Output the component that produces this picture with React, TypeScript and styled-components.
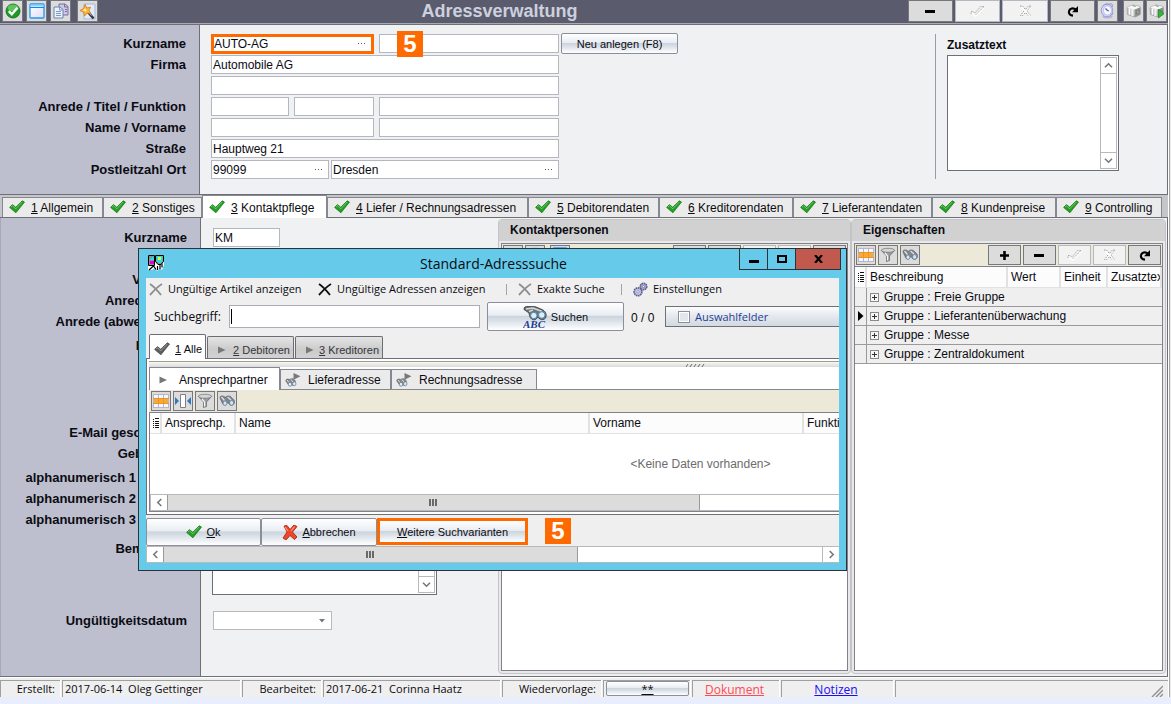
import React from "react";
import styled, { createGlobalStyle, css } from "styled-components";

const sans = `"Liberation Sans", Arial, sans-serif`;
const ui = `"Open Sans", "Segoe UI", sans-serif`;
const c = {
  bar: "#5a5c6d",
  side: "#bdbfcf",
  paper: "#f0f1f3",
  face: "#efefef",
  line: "#6f6f77",
  field: "#b4b7bf",
  orange: "#ff6a00",
  sky: "#66caea",
  beige: "#ece9d8",
  gray: "#dcdcdc",
};

const GlobalStyle = createGlobalStyle`
  *, *::before, *::after { box-sizing: border-box; }
  body { margin: 0; background: #e8eefe; font: 12px/16px ${sans}; color: #0b0b12; }
  button, input, textarea, select { font: inherit; color: inherit; margin: 0; padding: 0; border-radius: 0; }
  svg { display: block; flex: none; }
`;

/* ---------- page frame ---------- */
const Page = styled.div`
  position: relative;
  min-height: 100vh;
  display: flex;
  flex-direction: column;
  padding-bottom: 7px;
`;
const Frame = styled.main`
  flex: 1;
  display: flex;
  flex-direction: column;
  margin-right: 3px;
  background: #c5c6ca;
  box-shadow: 1px 0 #fff, 2px 0 #a9a9ac, 3px 0 #e9e9e9;
`;
const TitleBar = styled.header`
  display: flex;
  height: 23px;
  padding: 0 1px 0 2px;
  background: ${c.bar};
`;
const ToolGroup = styled.div<{ $end?: boolean }>`
  flex: ${(p) => (p.$end ? "1" : "0 0 36%")};
  display: flex;
  gap: ${(p) => (p.$end ? 2 : 3)}px;
  justify-content: ${(p) => (p.$end ? "flex-end" : "flex-start")};
`;
const Title = styled.h1`
  margin: 0;
  font: bold 18px/23px ${sans};
  color: #cdd0de;
`;
const ToolButton = styled.button<{ $w?: number; $dim?: boolean; $gap?: number }>`
  width: ${(p) => p.$w ?? 21}px;
  height: 22px;
  margin-left: ${(p) => p.$gap ?? 0}px;
  display: flex;
  align-items: center;
  justify-content: center;
  border: 1px solid ${(p) => (p.$dim ? "#b5b8c0" : "#77787e")};
  background: ${(p) => (p.$dim ? "#f2f2f2" : c.gray)};
`;
const SmallTool = styled(ToolButton)`
  height: 20px;
`;

/* ---------- forms ---------- */
const FormBand = styled.section<{ $side: number }>`
  background: linear-gradient(
    to right,
    ${c.side} ${(p) => p.$side}px,
    ${c.line} ${(p) => p.$side}px ${(p) => p.$side + 1}px,
    ${c.paper} ${(p) => p.$side + 1}px
  );
`;
const HeaderBand = styled(FormBand)`
  display: flex;
  justify-content: space-between;
  padding: 9px 0 15px;
  margin-top: 2px;
  border-right: 1px solid ${c.line};
  border-bottom: 1px solid ${c.line};
  box-shadow: 0 -1px ${c.line}, 0 -2px #a9aab2, 0 1px #9a9ba3;
`;
const HeaderAction = styled.div`
  flex: 1;
  margin-top: -1px;
  padding-left: 2px;
`;
const FormRow = styled.div<{ $gap?: number; $col?: number }>`
  display: grid;
  grid-template-columns: 186px 1fr;
  column-gap: ${(p) => p.$col ?? 25}px;
  margin-top: ${(p) => p.$gap ?? 2}px;
`;
const Label = styled.label<{ $inset?: number }>`
  padding-right: ${(p) => p.$inset ?? 0}px;
  font: bold 13px/19px ${sans};
  text-align: right;
  white-space: nowrap;
`;
const Fields = styled.div<{ $gap?: number }>`
  display: flex;
  gap: ${(p) => p.$gap ?? 5}px;
`;
const FieldBox = styled.span<{ $w: number; $hot?: boolean }>`
  width: ${(p) => p.$w}px;
  height: 19px;
  display: flex;
  align-items: center;
  border: 1px solid ${c.field};
  background: #fff;
  ${(p) =>
    p.$hot &&
    css`
      height: 20px;
      margin-bottom: -1px;
      border: 3px solid ${c.orange};
    `}
`;
const TextInput = styled.input<{ $hot?: boolean }>`
  flex: 1;
  min-width: 0;
  height: 14px;
  border: 0;
  outline: 0;
  background: none;
  padding-left: ${(p) => (p.$hot ? 0 : 1)}px;
  line-height: 14px;
`;
const More = styled.button`
  border: 0;
  background: none;
  padding-right: 5px;
`;
const PushButton = styled.button<{ $w: number; $h: number; $hot?: boolean; $space?: number }>`
  flex: none;
  width: ${(p) => p.$w}px;
  height: ${(p) => p.$h}px;
  display: flex;
  align-items: center;
  justify-content: center;
  gap: ${(p) => p.$space ?? 4}px;
  border: ${(p) => (p.$hot ? `3px solid ${c.orange}` : "1px solid #8b8f9b")};
  border-radius: ${(p) => (p.$hot ? 0 : 2)}px;
  background: linear-gradient(#fff, #e9edf2 45%, #ccd5de 50%, #d9e0e7 65%, #fff);
  font-size: 11px;
  white-space: nowrap;
`;
const Badge = styled.span`
  position: absolute;
  width: 26px;
  height: 26px;
  background: ${c.orange};
  color: #fff;
  font: bold 24px/26px ${sans};
  text-align: center;
`;
const HeaderBadge = styled(Badge)`
  left: 397px;
  top: 31px;
`;
const ExtraText = styled.div`
  width: 232px;
  padding: 0 0 8px 11px;
  border-left: 1px solid #9a9ba3;
`;
const ExtraLabel = styled.label`
  display: block;
  padding: 3px 0 2px;
  font: bold 12px/16px ${sans};
`;
const MemoBox = styled.div<{ $w: number; $h: number }>`
  width: ${(p) => p.$w}px;
  height: ${(p) => p.$h}px;
  display: flex;
  padding: 1px;
  border: 1px solid ${c.line};
  background: #fff;
`;
const Memo = styled.textarea`
  flex: 1;
  min-width: 0;
  border: 0;
  resize: none;
  outline: 0;
`;
const VScroll = styled.div`
  width: 17px;
  display: flex;
  flex-direction: column;
  justify-content: space-between;
  border: 1px solid #b9b9b9;
`;
const ArrowButton = styled.button<{ $side: "top" | "bottom" | "left" | "right" }>`
  flex: none;
  width: 17px;
  height: 16px;
  display: grid;
  place-items: center;
  border: 0 solid #b9b9b9;
  background: #fff;
  ${(p) => p.$side === "top" && "border-bottom-width: 1px; width: 100%;"}
  ${(p) => p.$side === "bottom" && "border-top-width: 1px; width: 100%;"}
  ${(p) => p.$side === "left" && "border-left-width: 1px; height: 100%;"}
  ${(p) => p.$side === "right" && "border-left-width: 1px; height: 100%;"}
`;
const SelectBox = styled.span`
  width: 119px;
  height: 19px;
  display: grid;
  align-items: center;
  border: 1px solid #b9b9b9;
  background: #fff;
  select, svg { grid-area: 1 / 1; }
  svg { justify-self: end; margin-right: 6px; }
`;
const Select = styled.select`
  width: 100%;
  height: 100%;
  border: 0;
  appearance: none;
  background: none;
`;

/* ---------- main tabs ---------- */
const TabStrip = styled.nav`
  display: flex;
  align-items: flex-end;
  height: 23px;
  padding-left: 2px;
  border-bottom: 1px solid ${c.line};
  background: #c5c6ca;
`;
const Tab = styled.button<{ $w: number; $on?: boolean }>`
  flex: none;
  width: ${(p) => p.$w}px;
  height: ${(p) => (p.$on ? 23 : 20)}px;
  margin-bottom: ${(p) => (p.$on ? -1 : 0)}px;
  display: flex;
  align-items: center;
  gap: 6px;
  padding: ${(p) => (p.$on ? 2 : 1)}px 0 0 6px;
  border: 1px solid #858792;
  border-bottom: 0;
  background: ${(p) => (p.$on ? "#fff" : "#ebebeb")};
  white-space: nowrap;
`;
const TabTick = styled.span`
  margin-bottom: 2px;
`;

/* ---------- workspace ---------- */
const Workspace = styled.div`
  flex: 1;
  display: flex;
  padding-right: 1px;
  background: ${c.paper};
  border-right: 1px solid ${c.line};
  border-bottom: 1px solid ${c.line};
`;
const ContactForm = styled(FormBand)`
  width: 498px;
  padding-top: 10px;
  border-left: 1px solid #a6a8ba;
`;
const Panel = styled.section<{ $w?: number }>`
  flex: ${(p) => (p.$w ? `0 0 ${p.$w}px` : "1")};
  min-width: 0;
  display: flex;
  flex-direction: column;
  margin: 1px 0 2px;
  padding: 0 2px 2px;
  border: 1px solid #c4c4c6;
  border-radius: 4px;
  background: #e9e9eb;
`;
const PanelTitle = styled.h2`
  margin: 0 -2px 2px;
  padding: 2px 11px 3px;
  background: #d1d1d1;
  font: bold 12px/16px ${sans};
`;
const PanelBody = styled.div`
  flex: 1;
  border: 1px solid #80818b;
  background: #fff;
`;
const Toolbar = styled.div`
  display: flex;
  gap: 2px;
  padding: 1px 1px 0;
  height: 22px;
  background: ${c.beige};
`;
const Spacer = styled.span`
  flex: 1;
`;
const DataTable = styled.table<{ $w?: number }>`
  width: ${(p) => (p.$w ? `${p.$w}px` : "100%")};
  table-layout: fixed;
  border-collapse: separate;
  border-spacing: 0;
  border-top: 1px solid #80818b;
`;
const Th = styled.th<{ $w?: number }>`
  width: ${(p) => (p.$w ? `${p.$w}px` : "auto")};
  height: 21px;
  padding: 0 0 0 3px;
  border-right: 2px solid #e2e2e2;
  border-bottom: 1px solid #e2e2e2;
  background: #fcfcfc;
  font-weight: normal;
  text-align: left;
  white-space: nowrap;
  overflow: hidden;
`;
const GutterCell = styled.td`
  height: 19px;
  padding: 0 0 0 3px;
  border-right: 1px solid #9a9a9a;
  border-bottom: 1px solid #9a9a9a;
  background: ${c.face};
`;
const GroupCell = styled.td`
  height: 19px;
  padding: 0;
  border-bottom: 1px solid #9a9a9a;
  background: ${c.face};
`;
const GroupLine = styled.div`
  display: flex;
  align-items: center;
  gap: 5px;
  padding-left: 3px;
`;
const Expander = styled.button`
  width: 9px;
  height: 9px;
  border: 1px solid #8a8a8a;
  background: #f6f6f6;
  display: grid;
  place-items: center;
`;

/* ---------- status bar ---------- */
const StatusBar = styled.footer`
  display: flex;
  gap: 2px;
  height: 20px;
  margin-right: 3px;
  padding-top: 2px;
  border-top: 1px solid #fff;
  background: ${c.face};
  box-shadow: 1px 0 #fff, 2px 0 #a9a9ac, 3px 0 #e9e9e9;
  font: 11px/15px ${ui};
`;
const StatusCell = styled.div<{ $w?: number; $align?: string }>`
  flex: ${(p) => (p.$w ? `0 0 ${p.$w}px` : "1")};
  min-width: 0;
  display: flex;
  justify-content: ${(p) => p.$align ?? "flex-start"};
  padding: 0 5px 0 2px;
  border: solid #a0a0a0;
  border-width: 1px 0 0 1px;
  box-shadow: 1px 0 #fff;
  white-space: pre;
`;
const StatusLink = styled.a<{ $red?: boolean }>`
  color: ${(p) => (p.$red ? "#ff4a52" : "#1a0cf5")};
  font-size: 12px;
  line-height: 17px;
`;

/* ---------- dialog ---------- */
const Dialog = styled.section`
  position: absolute;
  left: 138px;
  top: 248px;
  width: 709px;
  padding: 0 7px 7px;
  border: 1px solid #2e3136;
  background: ${c.sky};
`;
const DialogBar = styled.header`
  display: grid;
  grid-template-columns: 102px 1fr 102px;
  height: 29px;
  margin-right: -2px;
`;
const DialogTitle = styled.h2`
  margin: 0;
  font: 14px/30px ${ui};
  text-align: center;
`;
const AppIcon = styled.div`
  padding: 6px 0 0 2px;
`;
const WindowButtons = styled.div`
  display: flex;
  justify-content: flex-end;
`;
const WindowButton = styled.button<{ $close?: boolean }>`
  width: ${(p) => (p.$close ? 46 : 28)}px;
  height: 21px;
  display: grid;
  place-items: center;
  border: solid #2e3136;
  border-width: 0 ${(p) => (p.$close ? 1 : 0)}px 1px 1px;
  background: ${(p) => (p.$close ? "#c2594f" : c.sky)};
`;
const DialogBody = styled.div`
  background: ${c.face};
  overflow: hidden;
`;
const OptionRow = styled.div`
  display: flex;
  align-items: center;
  height: 24px;
  padding: 0 0 2px 3px;
  font: 11px/22px ${ui};
`;
const Option = styled.button<{ $w: number }>`
  width: ${(p) => p.$w}px;
  display: flex;
  align-items: center;
  gap: 5px;
  border: 0;
  background: none;
  white-space: nowrap;
`;
const OptionRule = styled.span`
  width: 12px;
  height: 11px;
  border-left: 1px solid #a4a4a4;
`;
const SearchRow = styled.div`
  display: flex;
  align-items: center;
  height: 29px;
  padding-left: 8px;
`;
const SearchLabel = styled.label`
  width: 75px;
  font: 12px/16px ${ui};
`;
const SearchInput = styled.input`
  width: 251px;
  height: 23px;
  margin-right: 7px;
  border: 1px solid #a9adb8;
  background: linear-gradient(#000, #000) 1px 3px / 1px 15px no-repeat #fff;
`;
const HitCount = styled.output`
  width: 41px;
  padding: 3px 0 0 7px;
`;
const Selection = styled.label`
  flex: 1;
  height: 21px;
  display: flex;
  align-items: center;
  gap: 5px;
  padding-left: 12px;
  border: solid ${c.line};
  border-width: 1px 0 1px 1px;
  background: linear-gradient(#fdfdfe, #e8ebf0 40%, #d3d9e1);
  color: #1c3f94;
  font: 11px/16px ${ui};
`;
const Check = styled.input`
  appearance: none;
  width: 12px;
  height: 12px;
  border: 1px solid #8b8f9b;
  background: #e3e6ea;
  box-shadow: inset 0 0 0 1px #fff;
`;
const FilterTabs = styled.div`
  display: flex;
  align-items: flex-end;
  gap: 1px;
  height: 28px;
  padding: 2px 3px 0;
  border-bottom: 1px solid ${c.line};
`;
const FilterTab = styled.button<{ $w: number; $on?: boolean }>`
  width: ${(p) => p.$w}px;
  height: ${(p) => (p.$on ? 25 : 22)}px;
  margin-bottom: ${(p) => (p.$on ? -1 : 0)}px;
  display: flex;
  align-items: center;
  justify-content: space-between;
  padding: ${(p) => (p.$on ? "3px 3px 0 4px" : "4px 3px 0 9px")};
  border: 1px solid #6c6d74;
  border-bottom: 0;
  border-radius: 2px 2px 0 0;
  background: ${(p) => (p.$on ? "#fff" : "linear-gradient(#e4e4e4, #cbcbcb 60%, #d2d2d2)")};
  color: ${(p) => (p.$on ? "#0b0b12" : "#36363c")};
  white-space: nowrap;
  font-size: 11px;
`;
const ResultArea = styled.div`
  padding-left: 2px;
  border-left: 1px solid ${c.line};
  border-bottom: 1px solid ${c.line};
  background: #fff;
`;
const Splitter = styled.div`
  height: 8px;
  padding: 3px 0 0 536px;
  border-top: 2px solid #fff;
  box-shadow: inset 0 1px #9c9c9c;
  background: linear-gradient(#fff, #f3efe4 40%, #d6dae0);
`;
const SubTabs = styled.div`
  display: flex;
  align-items: flex-end;
  height: 23px;
  border-bottom: 1px solid #858792;
`;
const SubTab = styled.button<{ $w: number; $on?: boolean }>`
  width: ${(p) => p.$w}px;
  height: ${(p) => (p.$on ? 23 : 20)}px;
  margin-bottom: ${(p) => (p.$on ? -1 : 0)}px;
  display: flex;
  align-items: center;
  gap: 7px;
  padding: 1px 0 0 4px;
  border: 1px solid #858792;
  border-bottom: 0;
  background: ${(p) => (p.$on ? "#fff" : "#ebebeb")};
  white-space: nowrap;
`;
const ResultGrid = styled.div`
  border-left: 1px solid #80818b;
  border-bottom: 1px solid #80818b;
  margin-bottom: 2px;
  overflow: hidden;
`;
const EmptyCell = styled.td`
  height: 60px;
  padding: 0;
  color: #6c6c6c;
  text-align: center;
`;
const HScroll = styled.div`
  display: flex;
  height: 17px;
  border-top: 1px solid #b9b9b9;
  border-bottom: 1px solid #b9b9b9;
  background: #fff;
`;
const Thumb = styled.span<{ $w: number }>`
  width: ${(p) => p.$w}px;
  display: grid;
  place-items: center;
  border-right: 1px solid #9a9a9a;
  border-left: 1px solid #9a9a9a;
  background: ${c.gray};
`;
const Actions = styled.div`
  display: flex;
  padding-top: 3px;
  height: 31px;
  position: relative;
`;
const ActionBadge = styled(Badge)`
  left: 399px;
  top: 3px;
`;

/* ---------- icons ---------- */
const Tick = ({ color = "#22a022", dark = "#12700f" }) => (
  <svg width="16" height="14" viewBox="0 0 16 14">
    <path d="M.6 7.400 3.400 4.600l3.300 2.600L13.300.8l2.200 1.300L6.900 12.800Z" fill={color} stroke={dark} strokeWidth=".7" strokeLinejoin="round" />
    <path d="m2 7 1.500-1.200 3.300 3L13.200 2" fill="none" stroke="#fff" strokeOpacity=".35" />
  </svg>
);
const Dots = () => (
  <svg width="8" height="2" viewBox="0 0 8 2"><path d="M0 .5h1M3 .5h1M6 .5h1" stroke="#555" /></svg>
);
const Chevron = ({ d }: { d: string }) => (
  <svg width="9" height="9" viewBox="0 0 9 9"><path d={d} fill="none" stroke="#77787c" strokeWidth="1.6" /></svg>
);
const up = "M1 6.3 4.5 2.8 8 6.3";
const down = "M1 2.7 4.5 6.2 8 2.7";
const left = "M6.3 1 2.8 4.5 6.3 8";
const right = "M2.7 1 6.2 4.5 2.7 8";
const Minus = () => (
  <svg width="11" height="11" viewBox="0 0 11 11"><path d="M0 5.500h10" stroke="#000" strokeWidth="3" /></svg>
);
const Plus = () => (
  <svg width="11" height="11" viewBox="0 0 11 11"><path d="M1 5.500h9M5.500 1v9" stroke="#000" strokeWidth="2.600" /></svg>
);
const DimTick = () => (
  <svg width="15" height="12" viewBox="0 0 15 12">
    <path d="M2 8.500 5.500 11l9-8.500" fill="none" stroke="#fff" strokeWidth="1.500" />
    <path d="M1 9V6.500h2l2 1.500L10.500 1.500H14L5.500 10" fill="none" stroke="#a8a8a8" strokeDasharray="1.500 1" />
  </svg>
);
const DimCross = () => (
  <svg width="13" height="12" viewBox="0 0 13 12">
    <path d="m2.500 2 9 9m0-9-9 9" stroke="#fff" strokeWidth="2" />
    <path d="M1 1h2.500l3 3.500L9.500 1H12L8 6l3.500 4.500M5 6 1.500 10.500H4l2.500-3 2.500 3" fill="none" stroke="#9c9c9c" strokeDasharray="1.500 1" />
  </svg>
);
const Redo = () => (
  <svg width="12" height="12" viewBox="0 0 12 12">
    <path d="M6 10.700C3 10.500 1.500 8.500 2 6.200 2.500 3.300 6.200 2.300 9 4.600" fill="none" stroke="#000" strokeWidth="2.200" />
    <path d="M11 1v6.200H5Z" fill="#000" />
  </svg>
);
const OkBall = () => (
  <svg width="16" height="16" viewBox="0 0 16 16">
    <circle cx="8" cy="8" r="7" fill="#1f9a24" stroke="#0f6a18" strokeWidth=".8" />
    <ellipse cx="8" cy="4.800" rx="5.500" ry="3.400" fill="#7bd676" opacity=".7" />
    <path d="m3.800 8.200 3 3 5.600-6.400" fill="none" stroke="#fff" strokeWidth="2.400" />
  </svg>
);
const WindowIcon = () => (
  <svg width="16" height="16" viewBox="0 0 16 16">
    <defs><linearGradient id="win" x2="1" y2="1"><stop stopColor="#fff" /><stop offset="1" stopColor="#dcdcf8" /></linearGradient></defs>
    <rect x="1" y="1" width="14" height="14" rx="1" fill="url(#win)" stroke="#2398f0" strokeWidth="1.300" />
    <path d="M1.500 2.500h13" stroke="#8fd4ff" strokeWidth="2" /><path d="M1 4.500h14" stroke="#1888e8" />
  </svg>
);
const CopyIcon = () => (
  <svg width="16" height="16" viewBox="0 0 16 16">
    <path d="M6 1h6l3 2.500V12H6Z" fill="#cfc8e2" stroke="#7b6ba6" /><path d="M11.500 1v3H15M12 6.500h2M12 8.500h2" fill="none" stroke="#7b6ba6" />
    <path d="M1 4h6l3 2.500V15H1Z" fill="#edf2fb" stroke="#6782b4" /><path d="M6.500 4v3H10M3 8.500h5M3 10.500h5M3 12.500h5" fill="none" stroke="#7f98c4" />
  </svg>
);
const WandIcon = () => (
  <svg width="17" height="17" viewBox="0 0 17 17">
    <path d="M5 1h11v15H5Z" fill="#e3eaf8" stroke="#a5b7da" />
    <path d="m9 9 5.500 6.500" stroke="#35363b" strokeWidth="2.600" /><path d="m9.500 9 3 3.500" stroke="#b8bac2" />
    <path d="m6.200 1.500 1.600 3.500 3.700-.8L10 7.500l2 3-3.800-.5L5.500 13l-.8-3.800L1 7.500l3.700-2Z" fill="#fcb73e" stroke="#cf7a15" strokeWidth=".8" />
    <path d="M6 5 7.500 8 4 8Z" fill="#fff1a8" />
  </svg>
);
const ClockIcon = () => (
  <svg width="15" height="16" viewBox="0 0 15 16">
    <ellipse cx="7.500" cy="13.500" rx="5" ry="2" fill="#b6b7dc" />
    <ellipse cx="7" cy="7.500" rx="5.700" ry="6.300" fill="#d7daf6" stroke="#9a9dd8" /><ellipse cx="7.500" cy="7.500" rx="4" ry="4.600" fill="#f6f7ff" stroke="#b2b6e4" strokeWidth=".8" />
    <path d="m7.500 7.500-2-2M7.500 7.500l1.500.5" stroke="#5058b8" strokeWidth="1.200" /><path d="M3 2.500 6 1h6l.5 3M12 12l1-2" fill="none" stroke="#9498d2" />
  </svg>
);
const BoxIcon = ({ play }: { play?: boolean }) => (
  <svg width="16" height="16" viewBox="0 0 16 16">
    <path d="m1 4.500 6-2.500 7 1.500v8L9.500 14 1.500 11.500Z" fill="#d9dad9" stroke="#8e908e" strokeWidth=".7" />
    <path d="M8.500 6.500 14.500 4v7.500l-6 2.500Z" fill="#8e918f" /><path d="M1 4.500 7 2l7.500 2-6 2.500Z" fill="#f6f7f6" />
    <path d="M3.500 5.500v6M6 6v7" stroke="#fff" strokeWidth="1.300" /><path d="M2 5v6.500M5 6v6.500" stroke="#b0b2b0" strokeWidth=".6" /><path d="m6.500 2.500 3 1" stroke="#5d9e5d" />
    <path d="M10.500 8 13 7v3l-2.500 1Z" fill="#a9aca9" stroke="#6a6d6b" strokeWidth=".6" />
    {play && <path d="m9.500 6.500 5.500 4-5.500 4.500Z" fill="#35b83a" stroke="#168a1e" strokeWidth=".7" />}
  </svg>
);
const GridIcon = () => (
  <svg width="16" height="16" viewBox="0 0 16 16">
    <path d="M0 1h16v14H0Z" fill="#f6f6fb" /><path d="M0 5h16v6H0Z" fill="#f9a935" />
    <path d="M0 1.500h16M0 14.500h16M.5 1v14M5.500 1v14M10.500 1v14M15.500 1v14" stroke="#b4b5cf" /><path d="M0 5.500h16M0 10.500h16M5.500 5v6M10.500 5v6" stroke="#e8962a" />
  </svg>
);
const FitIcon = () => (
  <svg width="18" height="16" viewBox="0 0 18 16">
    <path d="M6.500 1.500h5v13h-5Z" fill="#fff" stroke="#7e8086" /><path d="M1 4v8l4-4ZM17 4v8l-4-4Z" fill="#2f78bd" />
  </svg>
);
const FunnelIcon = () => (
  <svg width="16" height="16" viewBox="0 0 16 16">
    <path d="M1.500 3.500 6.500 9v5.500L9.500 13.500V9L14.500 3.500Z" fill="#9a9d9d" stroke="#5f6262" strokeWidth=".7" />
    <ellipse cx="8" cy="3.300" rx="6.700" ry="2" fill="#d4d6d6" stroke="#6e7070" strokeWidth=".7" /><path d="M5 6 7.600 9v4.500" stroke="#f4f4f4" fill="none" strokeWidth="1.300" />
  </svg>
);
const Binoculars = () => (
  <svg width="16" height="12" viewBox="0 0 16 12">
    <path d="M1 3C.5 1 3 .5 4.500 1.200L6.500 2.200C7.500.8 10 .6 11.500 1.500L15 5c1 2 .5 4-1 5-2 1-3.500.2-4-1.500L8 7.500 7.500 9.500C6 11 4 10 3.500 8.500Z" fill="#7f858a" stroke="#55595d" strokeWidth=".6" />
    <path d="m2.500 2 3 3.500M8.500 2l3.500 3" stroke="#dde1e5" strokeWidth="1.300" />
    <ellipse cx="6" cy="8.200" rx="1.900" ry="2.200" fill="#cfe6fb" stroke="#6a7f93" strokeWidth=".7" /><ellipse cx="12.600" cy="7.900" rx="2" ry="2.300" fill="#cfe6fb" stroke="#6a7f93" strokeWidth=".7" />
  </svg>
);
const SearchArrow = () => (
  <svg width="16" height="14" viewBox="0 0 16 14">
    <path d="m8.500 0 7 3.300-7 3.400Z" fill="#77797b" />
    <path d="M.8 8C.5 6 3 5.500 4.500 6.500 6 5 9 5.500 10 7.500c1 2.500.5 4-1 4.500l-5 .5Z" fill="#85888b" stroke="#5d6063" strokeWidth=".6" />
    <path d="m2 7 2 2.500M6 6.500l2 2.500" stroke="#dde1e5" />
    <ellipse cx="5" cy="11.300" rx="1.700" ry="2" fill="#dbecfb" stroke="#6a7680" strokeWidth=".7" /><ellipse cx="9.300" cy="10.800" rx="1.700" ry="2" fill="#dbecfb" stroke="#6a7680" strokeWidth=".7" />
  </svg>
);
const Play = ({ w = 9 }: { w?: number }) => (
  <svg width={w} height="8" viewBox="0 0 9 8"><path d="m1 .5 7.500 3.500L1 7.500Z" fill="#77787a" /></svg>
);
const BigSearch = () => (
  <svg width="24" height="22" viewBox="0 0 24 22">
    <path d="M1 3.500C.5 1 3 .3 5 .3h5c2 0 3.500.8 5 1.500L20 4c3 2 4 5 2.500 8-1.500 2-4 2-5.500 1L14.500 11c-1 3-4 3.500-6 2C6.500 11.500 6.500 9 6 7Z" fill="#6f7376" stroke="#35383b" strokeWidth=".8" />
    <path d="m3 3 7-1 5 2M6 5.500l4-1.500M14 3.500l5 2" fill="none" stroke="#d5d8da" strokeWidth="1.500" />
    <circle cx="10.800" cy="9.500" r="3.200" fill="#d6efff" stroke="#5384ac" /><circle cx="18.800" cy="9" r="3.300" fill="#d6efff" stroke="#5384ac" />
    <text x="0" y="21.500" fontFamily="Liberation Serif, serif" fontSize="11" fontWeight="bold" fontStyle="italic" fill="#1e3e94">ABC</text>
  </svg>
);
const Cross = ({ color }: { color: string }) => (
  <svg width="14" height="14" viewBox="0 0 14 14">
    <path d="M1 2c4 2.500 7 6 11 11M13 2C8.500 4.500 5 8.500 1 13" stroke={color} strokeWidth="1.900" fill="none" />
  </svg>
);
const Gears = () => (
  <svg width="15" height="15" viewBox="0 0 15 15">
    <circle cx="10.500" cy="4.500" r="3.300" fill="#a4a4ce" stroke="#5d5d88" strokeWidth="1.500" strokeDasharray="1.600 .6" />
    <circle cx="5" cy="9.800" r="3.900" fill="#b4b4dc" stroke="#5d5d88" strokeWidth="1.600" strokeDasharray="1.600 .6" />
    <circle cx="5" cy="9.800" r="2.600" fill="#c8c8ec" /><circle cx="5" cy="9.800" r="1.200" fill="#fff" stroke="#6c6c9c" strokeWidth=".6" />
    <circle cx="10.500" cy="4.500" r="1" fill="#fff" stroke="#6c6c9c" strokeWidth=".6" />
  </svg>
);
const RedCross = () => (
  <svg width="16" height="15" viewBox="0 0 16 15">
    <path d="m2 1 3-.5 3 4L12 0l3 1.500L10.500 7l4.500 5-2.500 2.500L8 10.500 4 15l-3-2 4-6Z" fill="#ef4528" stroke="#a51d0d" strokeWidth=".8" />
    <path d="m3 2 3 4M12.500 1.500 9 6" stroke="#ff9a80" strokeWidth="1.200" />
  </svg>
);
const RowMarks = () => (
  <svg width="7" height="10" viewBox="0 0 7 10">
    <path d="M0 1.500h1M2 .5h4M0 3.500h1M2 3.500h4M0 5.500h1M2 5.500h4M0 7.500h1M2 7.500h4M0 9.500h1M2 9.500h4" stroke="#111" />
  </svg>
);
const Grip = () => (
  <svg width="9" height="7" viewBox="0 0 9 7"><path d="M1 0v7M4 0v7M7 0v7" stroke="#6a6a6a" strokeWidth="2" /></svg>
);
const FinderIcon = () => (
  <svg width="16" height="16" viewBox="0 0 16 16">
    <path d="M0 0h16v10l-2 5-2-2-3 3-2-3-3 2-4 0Z" fill="#fff" />
    <path d="M.5.500h6v10h-6ZM7.500.500h8v6l-2.500 3h-3l-2.500-3Z" fill="#8f8f8f" stroke="#000" />
    <path d="m2 4 4-2.500V5H2Z" fill="#19e5ee" /><path d="M8.500 1h6v5L12 8.500 8.500 6Z" fill="#19e5ee" /><path d="M2 6h4v3H2Z" fill="#e400d8" /><path d="M10 2h3v3h-3Z" fill="#ffee20" />
    <path d="m1 15 4.500-4L8 14.500M9.500 15v-4M12 14v-4M14 12.500V8.500" stroke="#000" fill="none" strokeWidth="1.200" />
  </svg>
);

/* ---------- data ---------- */
const mainTabs = [
  { n: 1, t: "Allgemein", w: 101 }, { n: 2, t: "Sonstiges", w: 99 }, { n: 3, t: "Kontaktpflege", w: 125 },
  { n: 4, t: "Liefer / Rechnungsadressen", w: 201 }, { n: 5, t: "Debitorendaten", w: 131 },
  { n: 6, t: "Kreditorendaten", w: 134 }, { n: 7, t: "Lieferantendaten", w: 139 },
  { n: 8, t: "Kundenpreise", w: 124 }, { n: 9, t: "Controlling", w: 106 },
];
const contactRows = [
  { id: "vorname", t: "Vorname", gap: 23 }, { id: "anrede2", t: "Anrede / Titel" }, { id: "anrede3", t: "Anrede (abweichend)" },
  { id: "position", t: "Position", gap: 5 }, { id: "email", t: "E-Mail geschäftlich", gap: 68 }, { id: "geburt", t: "Geburtstag" },
  { id: "alpha1", t: "alphanumerisch 1", gap: 5, inset: 51 }, { id: "alpha2", t: "alphanumerisch 2", inset: 51 },
  { id: "alpha3", t: "alphanumerisch 3", inset: 51 },
];
const groups = ["Freie Gruppe", "Lieferantenüberwachung", "Messe", "Zentraldokument"];

type FieldProps = { id?: string; w: number; value?: string; more?: boolean; hot?: boolean; label?: string };
const Field = ({ id, w, value = "", more, hot, label }: FieldProps) => (
  <FieldBox $w={w} $hot={hot}>
    <TextInput id={id} defaultValue={value} $hot={hot} aria-label={label} />
    {more && <More aria-label="Auswählen"><Dots /></More>}
  </FieldBox>
);
const EditButtons = () => (
  <>
    <SmallTool $w={33} aria-label="Hinzufügen"><Plus /></SmallTool>
    <SmallTool $w={33} aria-label="Entfernen"><Minus /></SmallTool>
    <SmallTool $w={33} $dim aria-label="Übernehmen"><DimTick /></SmallTool>
    <SmallTool $w={33} $dim aria-label="Verwerfen"><DimCross /></SmallTool>
    <SmallTool $w={33} aria-label="Aktualisieren"><Redo /></SmallTool>
  </>
);
const MemoField = ({ id, w, h }: { id: string; w: number; h: number }) => (
  <MemoBox $w={w} $h={h}>
    <Memo id={id} />
    <VScroll>
      <ArrowButton $side="top" aria-label="Nach oben"><Chevron d={up} /></ArrowButton>
      <ArrowButton $side="bottom" aria-label="Nach unten"><Chevron d={down} /></ArrowButton>
    </VScroll>
  </MemoBox>
);

const AddressHeader = () => (
  <HeaderBand $side={199}>
    <div>
      <FormRow $gap={0}>
        <Label htmlFor="kurz">Kurzname</Label>
        <Fields>
          <Field id="kurz" w={163} value="AUTO-AG" more hot />
          <Field w={180} label="Kurzname Zusatz" />
        </Fields>
      </FormRow>
      <FormRow><Label htmlFor="firma">Firma</Label><Field id="firma" w={348} value="Automobile AG" /></FormRow>
      <FormRow><span /><Field w={348} label="Firma Zeile 2" /></FormRow>
      <FormRow>
        <Label htmlFor="anrede">Anrede / Titel / Funktion</Label>
        <Fields><Field id="anrede" w={78} /><Field w={80} label="Titel" /><Field w={180} label="Funktion" /></Fields>
      </FormRow>
      <FormRow>
        <Label htmlFor="name">Name / Vorname</Label>
        <Fields><Field id="name" w={163} /><Field w={180} label="Vorname" /></Fields>
      </FormRow>
      <FormRow><Label htmlFor="strasse">Straße</Label><Field id="strasse" w={348} value="Hauptweg 21" /></FormRow>
      <FormRow>
        <Label htmlFor="plz">Postleitzahl Ort</Label>
        <Fields $gap={2}><Field id="plz" w={118} value="99099" more /><Field w={228} value="Dresden" more label="Ort" /></Fields>
      </FormRow>
    </div>
    <HeaderAction><PushButton $w={117} $h={21}>Neu anlegen (F8)</PushButton></HeaderAction>
    <ExtraText>
      <ExtraLabel htmlFor="zusatz">Zusatztext</ExtraLabel>
      <MemoField id="zusatz" w={172} h={116} />
    </ExtraText>
  </HeaderBand>
);

const SearchDialog = () => (
  <Dialog role="dialog" aria-label="Standard-Adresssuche">
    <DialogBar>
      <AppIcon><FinderIcon /></AppIcon>
      <DialogTitle>Standard-Adresssuche</DialogTitle>
      <WindowButtons>
        <WindowButton aria-label="Minimieren"><svg width="10" height="10" viewBox="0 0 10 10"><path d="M0 7.500h10" stroke="#000" strokeWidth="3" /></svg></WindowButton>
        <WindowButton aria-label="Maximieren"><svg width="10" height="8" viewBox="0 0 10 8"><path d="M1 1h8v6H1Z" fill="none" stroke="#000" strokeWidth="2" /></svg></WindowButton>
        <WindowButton $close aria-label="Schließen"><svg width="9" height="8" viewBox="0 0 9 8"><path d="m1 0 7 8M8 0 1 8" stroke="#000" strokeWidth="2.200" /></svg></WindowButton>
      </WindowButtons>
    </DialogBar>
    <DialogBody>
      <OptionRow>
        <Option $w={169}><Cross color="#8e8e8e" />Ungültige Artikel anzeigen</Option>
        <Option $w={188}><Cross color="#111" />Ungültige Adressen anzeigen</Option>
        <OptionRule />
        <Option $w={103}><Cross color="#8e8e8e" />Exakte Suche</Option>
        <OptionRule />
        <Option $w={100}><Gears />Einstellungen</Option>
      </OptionRow>
      <SearchRow>
        <SearchLabel htmlFor="suche">Suchbegriff:</SearchLabel>
        <SearchInput id="suche" />
        <PushButton $w={137} $h={29}><BigSearch />Suchen</PushButton>
        <HitCount>0 / 0</HitCount>
        <Selection><Check type="checkbox" />Auswahlfelder</Selection>
      </SearchRow>
      <FilterTabs>
        <FilterTab $w={57} $on><Tick color="#5c5e60" dark="#3e4042" /><span><u>1</u> Alle</span></FilterTab>
        <FilterTab $w={87}><Play /><span><u>2</u> Debitoren</span></FilterTab>
        <FilterTab $w={88}><Play /><span><u>3</u> Kreditoren</span></FilterTab>
      </FilterTabs>
      <ResultArea>
        <Splitter>
          <svg width="20" height="3" viewBox="0 0 20 3"><path d="m1 3 2-3m2 3 2-3m2 3 2-3m2 3 2-3m2 3 2-3" stroke="#6e6e6e" /></svg>
        </Splitter>
        <SubTabs>
          <SubTab $w={131} $on><Play w={18} />Ansprechpartner</SubTab>
          <SubTab $w={111}><SearchArrow />Lieferadresse</SubTab>
          <SubTab $w={146}><SearchArrow />Rechnungsadresse</SubTab>
        </SubTabs>
        <Toolbar>
          <SmallTool $w={20} $gap={1} aria-label="Spalten"><GridIcon /></SmallTool>
          <SmallTool $w={20} aria-label="Breite anpassen"><FitIcon /></SmallTool>
          <SmallTool $w={20} aria-label="Filtern"><FunnelIcon /></SmallTool>
          <SmallTool $w={20} aria-label="Suchen"><Binoculars /></SmallTool>
        </Toolbar>
        <ResultGrid>
          <DataTable $w={1101}>
            <thead>
              <tr>
                <Th $w={12} aria-label="Zeile"><RowMarks /></Th>
                <Th $w={74}>Ansprechp.</Th><Th $w={354}>Name</Th><Th $w={214}>Vorname</Th><Th>Funktion</Th>
              </tr>
            </thead>
            <tbody><tr><EmptyCell colSpan={5}>&lt;Keine Daten vorhanden&gt;</EmptyCell></tr></tbody>
          </DataTable>
          <HScroll>
            <ArrowButton $side="left" aria-label="Nach links"><Chevron d={left} /></ArrowButton>
            <Thumb $w={533}><Grip /></Thumb>
          </HScroll>
        </ResultGrid>
      </ResultArea>
      <Actions>
        <PushButton $w={115} $h={28}><Tick /><span><u>O</u>k</span></PushButton>
        <PushButton $w={116} $h={28}><RedCross /><span><u>A</u>bbrechen</span></PushButton>
        <PushButton $w={151} $h={27} $hot><span><u>W</u>eitere Suchvarianten</span></PushButton>
        <ActionBadge>5</ActionBadge>
      </Actions>
      <HScroll>
        <ArrowButton $side="left" aria-label="Nach links"><Chevron d={left} /></ArrowButton>
        <Thumb $w={415}><Grip /></Thumb>
        <Spacer />
        <ArrowButton $side="right" aria-label="Nach rechts"><Chevron d={right} /></ArrowButton>
      </HScroll>
    </DialogBody>
  </Dialog>
);

export default function App() {
  return (
    <Page>
      <GlobalStyle />
      <Frame>
        <TitleBar>
          <ToolGroup>
            <ToolButton aria-label="Speichern"><OkBall /></ToolButton>
            <ToolButton aria-label="Fenster"><WindowIcon /></ToolButton>
            <ToolButton aria-label="Kopieren"><CopyIcon /></ToolButton>
            <ToolButton $gap={3} aria-label="Assistent"><WandIcon /></ToolButton>
          </ToolGroup>
          <Title>Adressverwaltung</Title>
          <ToolGroup $end>
            <ToolButton $w={45} aria-label="Entfernen"><Minus /></ToolButton>
            <ToolButton $w={45} $dim aria-label="Übernehmen"><DimTick /></ToolButton>
            <ToolButton $w={46} $dim aria-label="Verwerfen"><DimCross /></ToolButton>
            <ToolButton $w={45} aria-label="Aktualisieren"><Redo /></ToolButton>
            <ToolButton aria-label="Verlauf"><ClockIcon /></ToolButton>
            <ToolButton $gap={3} aria-label="Ablage"><BoxIcon /></ToolButton>
            <ToolButton aria-label="Ablage starten"><BoxIcon play /></ToolButton>
          </ToolGroup>
        </TitleBar>
        <AddressHeader />
        <TabStrip>
          {mainTabs.map((tab) => (
            <Tab key={tab.n} $w={tab.w} $on={tab.n === 3}>
              <TabTick><Tick /></TabTick><span><u>{tab.n}</u> {tab.t}</span>
            </Tab>
          ))}
        </TabStrip>
        <Workspace>
          <ContactForm $side={199}>
            <FormRow $gap={0} $col={26}><Label htmlFor="km">Kurzname</Label><Field id="km" w={67} value="KM" /></FormRow>
            {contactRows.map((r) => (
              <FormRow key={r.id} $gap={r.gap} $col={26}>
                <Label htmlFor={r.id} $inset={r.inset}>{r.t}</Label><Field id={r.id} w={224} />
              </FormRow>
            ))}
            <FormRow $gap={10}><Label htmlFor="bem">Bemerkung</Label><MemoField id="bem" w={225} h={56} /></FormRow>
            <FormRow $gap={16} $col={26}>
              <Label htmlFor="datum">Ungültigkeitsdatum</Label>
              <SelectBox>
                <Select id="datum" />
                <svg width="6" height="4" viewBox="0 0 6 4"><path d="M0 0h6L3 3.500Z" fill="#77787a" /></svg>
              </SelectBox>
            </FormRow>
          </ContactForm>
          <Panel>
            <PanelTitle>Kontaktpersonen</PanelTitle>
            <PanelBody>
              <Toolbar>
                <SmallTool $w={20} aria-label="Spalten"><GridIcon /></SmallTool>
                <SmallTool $w={20} aria-label="Filtern"><FunnelIcon /></SmallTool>
                <SmallTool $w={20} $gap={3} aria-label="Fenster"><WindowIcon /></SmallTool>
                <Spacer />
                <EditButtons />
              </Toolbar>
            </PanelBody>
          </Panel>
          <Panel $w={315}>
            <PanelTitle>Eigenschaften</PanelTitle>
            <PanelBody>
              <Toolbar>
                <SmallTool $w={20} aria-label="Spalten"><GridIcon /></SmallTool>
                <SmallTool $w={20} aria-label="Filtern"><FunnelIcon /></SmallTool>
                <SmallTool $w={20} aria-label="Suchen"><Binoculars /></SmallTool>
                <Spacer />
                <EditButtons />
              </Toolbar>
              <DataTable>
                <thead>
                  <tr>
                    <Th $w={12} aria-label="Zeile"><RowMarks /></Th>
                    <Th>Beschreibung</Th><Th $w={53}>Wert</Th><Th $w={47}>Einheit</Th><Th $w={54}>Zusatztext</Th>
                  </tr>
                </thead>
                <tbody>
                  {groups.map((g, i) => (
                    <tr key={g}>
                      <GutterCell>{i === 1 && <svg width="6" height="10" viewBox="0 0 6 10"><path d="m0 0 5.500 5L0 10Z" fill="#000" /></svg>}</GutterCell>
                      <GroupCell colSpan={4}>
                        <GroupLine>
                          <Expander aria-label="Aufklappen"><svg width="5" height="5" viewBox="0 0 5 5"><path d="M0 2.500h5M2.500 0v5" stroke="#333" /></svg></Expander>
                          Gruppe : {g}
                        </GroupLine>
                      </GroupCell>
                    </tr>
                  ))}
                </tbody>
              </DataTable>
            </PanelBody>
          </Panel>
        </Workspace>
      </Frame>
      <StatusBar>
        <StatusCell $w={60} $align="flex-end">Erstellt:</StatusCell>
        <StatusCell $w={178}>2017-06-14  Oleg Gettinger</StatusCell>
        <StatusCell $w={79} $align="flex-end">Bearbeitet:</StatusCell>
        <StatusCell $w={177}>2017-06-21  Corinna Haatz</StatusCell>
        <StatusCell $w={99} $align="flex-end">Wiedervorlage:</StatusCell>
        <StatusCell $w={87}><PushButton $w={83} $h={15}><u>**</u></PushButton></StatusCell>
        <StatusCell $w={87} $align="center"><StatusLink href="#dokument" $red>Dokument</StatusLink></StatusCell>
        <StatusCell $w={112} $align="center"><StatusLink href="#notizen">Notizen</StatusLink></StatusCell>
        <StatusCell $align="flex-end">
          <svg width="12" height="16" viewBox="0 0 12 16"><path d="M1 16 12 5M5 16l7-7M9 16l3-3" stroke="#8e8e8e" strokeWidth="1.400" /></svg>
        </StatusCell>
      </StatusBar>
      <HeaderBadge>5</HeaderBadge>
      <SearchDialog />
    </Page>
  );
}
